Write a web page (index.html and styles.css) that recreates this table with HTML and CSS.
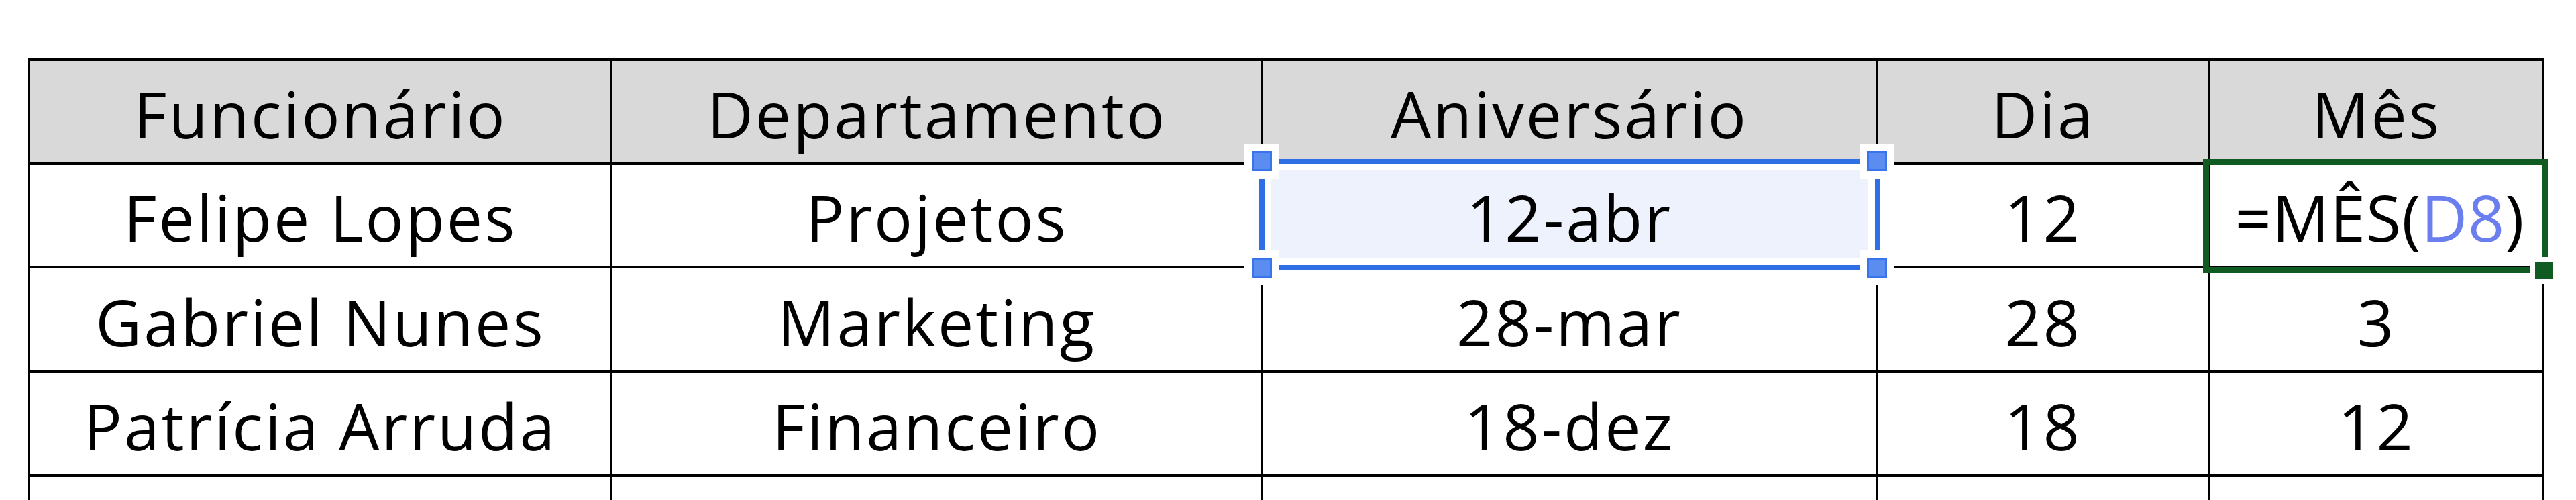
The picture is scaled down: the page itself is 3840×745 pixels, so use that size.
FILE: index.html
```html
<!DOCTYPE html>
<html lang="pt-BR">
<head>
<meta charset="utf-8">
<title>Planilha - Aniversários</title>
<link rel="stylesheet" href="styles.css">
</head>
<body>
<div class="sheet">
  <table class="grid">
    <colgroup>
      <col class="c1"><col class="c2"><col class="c3"><col class="c4"><col class="c5">
    </colgroup>
    <thead>
      <tr class="head">
        <th>Funcionário</th>
        <th>Departamento</th>
        <th>Aniversário</th>
        <th>Dia</th>
        <th>Mês</th>
      </tr>
    </thead>
    <tbody>
      <tr class="r-a">
        <td>Felipe Lopes</td>
        <td>Projetos</td>
        <td class="ref-cell">
          <div class="ref-box"><div class="ref-fill"></div></div>
          <span class="handle h-tl"></span><span class="handle h-tr"></span>
          <span class="handle h-bl"></span><span class="handle h-br"></span>
          <span class="cell-text">12-abr</span>
        </td>
        <td>12</td>
        <td class="active-cell">
          <div class="active-box"></div>
          <span class="fill-handle"></span>
          <span class="cell-text formula">=MÊS(<span class="ref-text">D8</span>)</span>
        </td>
      </tr>
      <tr class="r-b">
        <td>Gabriel Nunes</td>
        <td>Marketing</td>
        <td>28-mar</td>
        <td>28</td>
        <td>3</td>
      </tr>
      <tr class="r-c">
        <td>Patrícia Arruda</td>
        <td>Financeiro</td>
        <td>18-dez</td>
        <td>18</td>
        <td>12</td>
      </tr>
      <tr class="r-d">
        <td></td><td></td><td></td><td></td><td></td>
      </tr>
    </tbody>
  </table>
</div>
</body>
</html>
```

FILE: styles.css
```css
html, body {
  margin: 0;
  padding: 0;
  background: #ffffff;
  overflow: hidden;
}

.sheet {
  padding: 87px 0 0 42px;
}

.grid {
  border-collapse: separate;
  border-spacing: 0;
  table-layout: fixed;
  width: 3751px;
  border-top: 4px solid #000;
  border-left: 3px solid #000;
  font-family: "Open Sans", "Lato", sans-serif;
  font-size: 95px;
  letter-spacing: 3px;
  color: #000;
}

.c1 { width: 868px; }
.c2 { width: 970px; }
.c3 { width: 916px; }
.c4 { width: 496px; }
.c5 { width: 498px; }

.grid th,
.grid td {
  box-sizing: border-box;
  border-right: 3px solid #000;
  border-bottom: 4px solid #000;
  padding: 0 0 16px 0;
  height: 155px;
  line-height: 1.2;
  vertical-align: bottom;
  text-align: center;
  font-weight: 500;
  white-space: nowrap;
}

.head th {
  background: #d9d9d9;
}

.r-a td { height: 154px; }
.r-b td { height: 156px; }

.ref-cell,
.active-cell {
  position: relative;
}

.cell-text {
  position: relative;
  z-index: 3;
}

.ref-box {
  position: absolute;
  left: -6px;
  top: -9px;
  width: 926px;
  height: 166px;
  box-sizing: border-box;
  border: 8px solid #2f6fe6;
  padding: 9px 10px 10px 9px;
  background: #ffffff;
  z-index: 1;
}

.ref-fill {
  width: 100%;
  height: 100%;
  background: #edf2fd;
}

.handle {
  position: absolute;
  width: 30px;
  height: 30px;
  background: #5b8cf0;
  border: 11px solid #ffffff;
  box-shadow: inset 0 0 0 3px #3a74ea;
  z-index: 2;
}

.h-tl { left: -28px; top: -32px; }
.h-tr { left: 889px; top: -32px; }
.h-bl { left: -28px; top: 127px; }
.h-br { left: 889px; top: 127px; }

.active-cell {
  text-align: left;
}

.active-box {
  position: absolute;
  left: -11px;
  top: -9px;
  width: 514px;
  height: 170px;
  box-sizing: border-box;
  border: 9px solid #0f5b21;
  z-index: 1;
}

.fill-handle {
  position: absolute;
  left: 477px;
  top: 137px;
  width: 26px;
  height: 26px;
  background: #0f5b21;
  border: 7px solid #ffffff;
  z-index: 2;
}

.formula {
  display: inline-block;
  padding-left: 10px;
  letter-spacing: 1px;
}

.ref-text {
  color: #6b7ef0;
}
```
